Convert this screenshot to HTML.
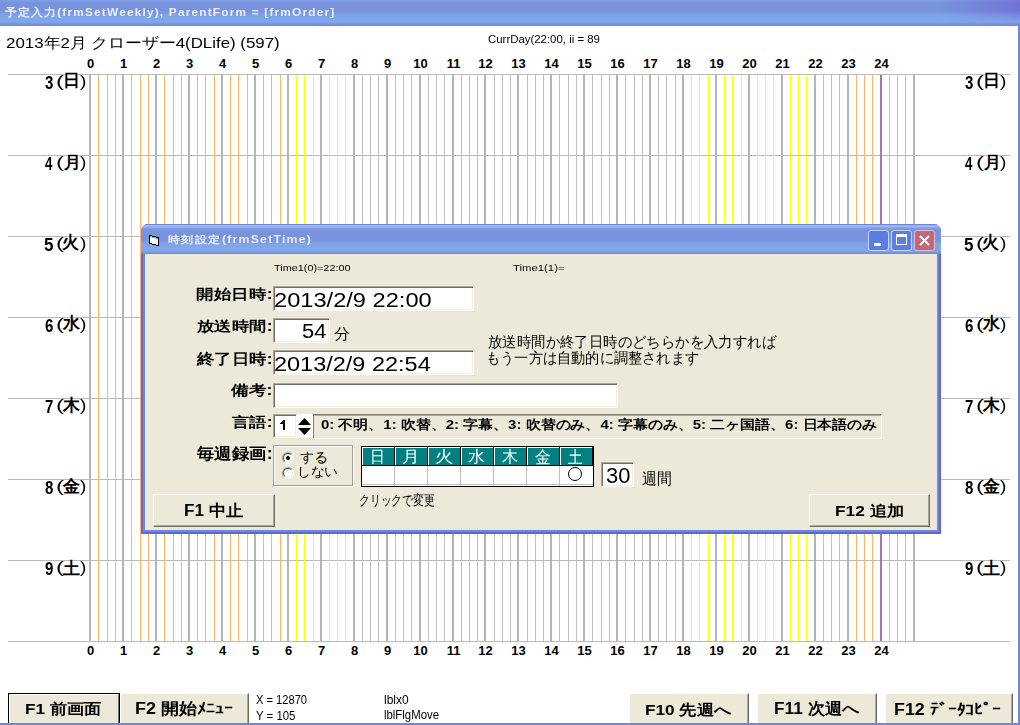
<!DOCTYPE html>
<html lang="ja"><head><meta charset="utf-8"><style>
*{box-sizing:border-box}
html,body{margin:0;padding:0;width:1020px;height:725px;overflow:hidden;background:#fff;font-family:"Liberation Sans",sans-serif;color:#000}
.a{position:absolute;white-space:nowrap}
.t{position:absolute;white-space:nowrap;transform-origin:0 0}
.vl{position:absolute;top:75px;height:566px}
.hl{position:absolute;left:8px;width:1002px;height:1px;background:#b9b9b9}
.lab{position:absolute;font-size:13px;font-weight:bold;line-height:13px;width:40px;text-align:center}
</style></head><body>

<div class="a" style="left:0;top:0;width:1020px;height:26px;background:linear-gradient(to bottom,#7c9de4 0px,#7c9de4 1px,#7892dd 3px,#7892dd 11px,#7ea6e7 16px,#80a8e8 22px,#7a90e0 24px,#6f88dc 26px)"></div>
<div class="a" style="left:940px;top:0;width:80px;height:24px;background:linear-gradient(to right,rgba(112,108,214,0) 0%,rgba(112,108,214,0.55) 75%,rgba(112,108,214,0.85) 100%);-webkit-mask-image:linear-gradient(to bottom,#000 40%,transparent 100%)"></div>
<div class="t" style="left:5.00px;top:7.00px;font-size:12px;line-height:12px;font-weight:bold;color:#e9eefa;transform:scale(0.9880,0.9231);letter-spacing:1.2px">予定入力(frmSetWeekly), ParentForm = [frmOrder]</div>
<div class="t" style="left:5.95px;top:36.00px;font-size:16px;line-height:16px;font-weight:normal;color:#000;transform:scale(1.0543,0.9375);">2013年2月 クローザー4(DLife) (597)</div>
<div class="t" style="left:488.00px;top:34.00px;font-size:11px;line-height:11px;font-weight:normal;color:#000;transform:scale(1.0370,1.0000);">CurrDay(22:00, ii = 89</div>
<div class="hl" style="top:74px"></div>
<div class="hl" style="top:155px"></div>
<div class="hl" style="top:236px"></div>
<div class="hl" style="top:317px"></div>
<div class="hl" style="top:398px"></div>
<div class="hl" style="top:479px"></div>
<div class="hl" style="top:560px"></div>
<div class="hl" style="top:641px"></div>
<div class="vl" style="left:89px;width:2px;background:#b4b4b4"></div>
<div class="vl" style="left:98px;width:1px;background:#ffb46a"></div>
<div class="vl" style="left:107px;width:1px;background:#ffb46a"></div>
<div class="vl" style="left:115px;width:1px;background:#ffb46a"></div>
<div class="vl" style="left:122px;width:2px;background:#b4b4b4"></div>
<div class="vl" style="left:131px;width:1px;background:#ffb46a"></div>
<div class="vl" style="left:140px;width:1px;background:#ffb46a"></div>
<div class="vl" style="left:148px;width:1px;background:#ffb46a"></div>
<div class="vl" style="left:155px;width:2px;background:#b4b4b4"></div>
<div class="vl" style="left:164px;width:1px;background:#ffb46a"></div>
<div class="vl" style="left:173px;width:1px;background:#ffb46a"></div>
<div class="vl" style="left:181px;width:1px;background:#ffb46a"></div>
<div class="vl" style="left:188px;width:2px;background:#b4b4b4"></div>
<div class="vl" style="left:197px;width:1px;background:#ffb46a"></div>
<div class="vl" style="left:205px;width:1px;background:#ffb46a"></div>
<div class="vl" style="left:214px;width:1px;background:#ffb46a"></div>
<div class="vl" style="left:221px;width:2px;background:#b4b4b4"></div>
<div class="vl" style="left:230px;width:1px;background:#ffb46a"></div>
<div class="vl" style="left:238px;width:1px;background:#ffb46a"></div>
<div class="vl" style="left:247px;width:1px;background:#ffb46a"></div>
<div class="vl" style="left:254px;width:2px;background:#b4b4b4"></div>
<div class="vl" style="left:263px;width:1px;background:#ffb46a"></div>
<div class="vl" style="left:271px;width:1px;background:#ffb46a"></div>
<div class="vl" style="left:280px;width:1px;background:#ffb46a"></div>
<div class="vl" style="left:287px;width:2px;background:#b4b4b4"></div>
<div class="vl" style="left:296px;width:1px;background:#ffff00"></div>
<div class="vl" style="left:304px;width:1px;background:#ffff00"></div>
<div class="vl" style="left:313px;width:1px;background:#ffff00"></div>
<div class="vl" style="left:320px;width:2px;background:#b4b4b4"></div>
<div class="vl" style="left:329px;width:1px;background:#ffff00"></div>
<div class="vl" style="left:337px;width:1px;background:#ffff00"></div>
<div class="vl" style="left:345px;width:1px;background:#ffff00"></div>
<div class="vl" style="left:353px;width:2px;background:#b4b4b4"></div>
<div class="vl" style="left:362px;width:1px;background:#c0c0c0"></div>
<div class="vl" style="left:370px;width:1px;background:#c0c0c0"></div>
<div class="vl" style="left:378px;width:1px;background:#c0c0c0"></div>
<div class="vl" style="left:386px;width:2px;background:#b4b4b4"></div>
<div class="vl" style="left:395px;width:1px;background:#c0c0c0"></div>
<div class="vl" style="left:403px;width:1px;background:#c0c0c0"></div>
<div class="vl" style="left:411px;width:1px;background:#c0c0c0"></div>
<div class="vl" style="left:419px;width:2px;background:#b4b4b4"></div>
<div class="vl" style="left:428px;width:1px;background:#c0c0c0"></div>
<div class="vl" style="left:436px;width:1px;background:#c0c0c0"></div>
<div class="vl" style="left:444px;width:1px;background:#c0c0c0"></div>
<div class="vl" style="left:452px;width:2px;background:#b4b4b4"></div>
<div class="vl" style="left:461px;width:1px;background:#c0c0c0"></div>
<div class="vl" style="left:469px;width:1px;background:#c0c0c0"></div>
<div class="vl" style="left:477px;width:1px;background:#c0c0c0"></div>
<div class="vl" style="left:484px;width:2px;background:#b4b4b4"></div>
<div class="vl" style="left:494px;width:1px;background:#c0c0c0"></div>
<div class="vl" style="left:502px;width:1px;background:#c0c0c0"></div>
<div class="vl" style="left:510px;width:1px;background:#c0c0c0"></div>
<div class="vl" style="left:517px;width:2px;background:#b4b4b4"></div>
<div class="vl" style="left:527px;width:1px;background:#c0c0c0"></div>
<div class="vl" style="left:535px;width:1px;background:#c0c0c0"></div>
<div class="vl" style="left:543px;width:1px;background:#c0c0c0"></div>
<div class="vl" style="left:550px;width:2px;background:#b4b4b4"></div>
<div class="vl" style="left:559px;width:1px;background:#c0c0c0"></div>
<div class="vl" style="left:568px;width:1px;background:#c0c0c0"></div>
<div class="vl" style="left:576px;width:1px;background:#c0c0c0"></div>
<div class="vl" style="left:583px;width:2px;background:#b4b4b4"></div>
<div class="vl" style="left:592px;width:1px;background:#c0c0c0"></div>
<div class="vl" style="left:601px;width:1px;background:#c0c0c0"></div>
<div class="vl" style="left:609px;width:1px;background:#c0c0c0"></div>
<div class="vl" style="left:616px;width:2px;background:#b4b4b4"></div>
<div class="vl" style="left:625px;width:1px;background:#c0c0c0"></div>
<div class="vl" style="left:634px;width:1px;background:#c0c0c0"></div>
<div class="vl" style="left:642px;width:1px;background:#c0c0c0"></div>
<div class="vl" style="left:649px;width:2px;background:#b4b4b4"></div>
<div class="vl" style="left:658px;width:1px;background:#c0c0c0"></div>
<div class="vl" style="left:666px;width:1px;background:#c0c0c0"></div>
<div class="vl" style="left:675px;width:1px;background:#c0c0c0"></div>
<div class="vl" style="left:682px;width:2px;background:#b4b4b4"></div>
<div class="vl" style="left:691px;width:1px;background:#ffff00"></div>
<div class="vl" style="left:699px;width:1px;background:#ffff00"></div>
<div class="vl" style="left:708px;width:1px;background:#ffff00"></div>
<div class="vl" style="left:715px;width:2px;background:#b4b4b4"></div>
<div class="vl" style="left:724px;width:1px;background:#ffff00"></div>
<div class="vl" style="left:732px;width:1px;background:#ffff00"></div>
<div class="vl" style="left:741px;width:1px;background:#ffff00"></div>
<div class="vl" style="left:748px;width:2px;background:#b4b4b4"></div>
<div class="vl" style="left:757px;width:1px;background:#ffff00"></div>
<div class="vl" style="left:765px;width:1px;background:#ffff00"></div>
<div class="vl" style="left:773px;width:1px;background:#ffff00"></div>
<div class="vl" style="left:781px;width:2px;background:#b4b4b4"></div>
<div class="vl" style="left:790px;width:1px;background:#ffff00"></div>
<div class="vl" style="left:798px;width:1px;background:#ffff00"></div>
<div class="vl" style="left:806px;width:1px;background:#ffff00"></div>
<div class="vl" style="left:814px;width:2px;background:#b4b4b4"></div>
<div class="vl" style="left:823px;width:1px;background:#ffb46a"></div>
<div class="vl" style="left:831px;width:1px;background:#ffb46a"></div>
<div class="vl" style="left:839px;width:1px;background:#ffb46a"></div>
<div class="vl" style="left:847px;width:2px;background:#b4b4b4"></div>
<div class="vl" style="left:856px;width:1px;background:#ffb46a"></div>
<div class="vl" style="left:864px;width:1px;background:#ffb46a"></div>
<div class="vl" style="left:872px;width:1px;background:#ffb46a"></div>
<div class="vl" style="left:880px;width:2px;background:#b070c0"></div>
<div class="vl" style="left:889px;width:1px;background:#ffb46a"></div>
<div class="vl" style="left:897px;width:1px;background:#ffb46a"></div>
<div class="vl" style="left:905px;width:1px;background:#ffb46a"></div>
<div class="vl" style="left:913px;width:2px;background:#b4b4b4"></div>
<div class="lab" style="left:70.5px;top:57px">0</div>
<div class="lab" style="left:70.5px;top:644px">0</div>
<div class="lab" style="left:103.5px;top:57px">1</div>
<div class="lab" style="left:103.5px;top:644px">1</div>
<div class="lab" style="left:136.5px;top:57px">2</div>
<div class="lab" style="left:136.5px;top:644px">2</div>
<div class="lab" style="left:169.5px;top:57px">3</div>
<div class="lab" style="left:169.5px;top:644px">3</div>
<div class="lab" style="left:202.5px;top:57px">4</div>
<div class="lab" style="left:202.5px;top:644px">4</div>
<div class="lab" style="left:235.5px;top:57px">5</div>
<div class="lab" style="left:235.5px;top:644px">5</div>
<div class="lab" style="left:268.5px;top:57px">6</div>
<div class="lab" style="left:268.5px;top:644px">6</div>
<div class="lab" style="left:301.5px;top:57px">7</div>
<div class="lab" style="left:301.5px;top:644px">7</div>
<div class="lab" style="left:334.5px;top:57px">8</div>
<div class="lab" style="left:334.5px;top:644px">8</div>
<div class="lab" style="left:367.5px;top:57px">9</div>
<div class="lab" style="left:367.5px;top:644px">9</div>
<div class="lab" style="left:400.5px;top:57px">10</div>
<div class="lab" style="left:400.5px;top:644px">10</div>
<div class="lab" style="left:433.5px;top:57px">11</div>
<div class="lab" style="left:433.5px;top:644px">11</div>
<div class="lab" style="left:465.5px;top:57px">12</div>
<div class="lab" style="left:465.5px;top:644px">12</div>
<div class="lab" style="left:498.5px;top:57px">13</div>
<div class="lab" style="left:498.5px;top:644px">13</div>
<div class="lab" style="left:531.5px;top:57px">14</div>
<div class="lab" style="left:531.5px;top:644px">14</div>
<div class="lab" style="left:564.5px;top:57px">15</div>
<div class="lab" style="left:564.5px;top:644px">15</div>
<div class="lab" style="left:597.5px;top:57px">16</div>
<div class="lab" style="left:597.5px;top:644px">16</div>
<div class="lab" style="left:630.5px;top:57px">17</div>
<div class="lab" style="left:630.5px;top:644px">17</div>
<div class="lab" style="left:663.5px;top:57px">18</div>
<div class="lab" style="left:663.5px;top:644px">18</div>
<div class="lab" style="left:696.5px;top:57px">19</div>
<div class="lab" style="left:696.5px;top:644px">19</div>
<div class="lab" style="left:729.5px;top:57px">20</div>
<div class="lab" style="left:729.5px;top:644px">20</div>
<div class="lab" style="left:762.5px;top:57px">21</div>
<div class="lab" style="left:762.5px;top:644px">21</div>
<div class="lab" style="left:795.5px;top:57px">22</div>
<div class="lab" style="left:795.5px;top:644px">22</div>
<div class="lab" style="left:828.5px;top:57px">23</div>
<div class="lab" style="left:828.5px;top:644px">23</div>
<div class="lab" style="left:861.5px;top:57px">24</div>
<div class="lab" style="left:861.5px;top:644px">24</div>
<div class="t" style="left:45.00px;top:73.40px;font-size:15px;line-height:15px;font-weight:bold;color:#000;transform:scale(1.0000,1.2000);">3</div>
<div class="t" style="left:55.50px;top:72.93px;font-size:16px;line-height:16px;font-weight:normal;color:#000;transform:scale(1.5000,1.0667);">(</div>
<div class="t" style="left:62.50px;top:72.00px;font-size:17px;line-height:17px;font-weight:bold;color:#000;transform:scale(1.0000,1.0000);">日</div>
<div class="t" style="left:80.00px;top:72.93px;font-size:16px;line-height:16px;font-weight:normal;color:#000;transform:scale(1.2000,1.0667);">)</div>
<div class="t" style="left:965.00px;top:73.40px;font-size:15px;line-height:15px;font-weight:bold;color:#000;transform:scale(1.0000,1.2000);">3</div>
<div class="t" style="left:975.50px;top:72.93px;font-size:16px;line-height:16px;font-weight:normal;color:#000;transform:scale(1.5000,1.0667);">(</div>
<div class="t" style="left:982.50px;top:72.00px;font-size:17px;line-height:17px;font-weight:bold;color:#000;transform:scale(1.0000,1.0000);">日</div>
<div class="t" style="left:1000.00px;top:72.93px;font-size:16px;line-height:16px;font-weight:normal;color:#000;transform:scale(1.2000,1.0667);">)</div>
<div class="t" style="left:45.00px;top:154.40px;font-size:15px;line-height:15px;font-weight:bold;color:#000;transform:scale(0.8889,1.2000);">4</div>
<div class="t" style="left:55.50px;top:153.93px;font-size:16px;line-height:16px;font-weight:normal;color:#000;transform:scale(1.5000,1.0667);">(</div>
<div class="t" style="left:64.00px;top:154.00px;font-size:17px;line-height:17px;font-weight:bold;color:#000;transform:scale(1.0000,1.0000);">月</div>
<div class="t" style="left:80.00px;top:153.93px;font-size:16px;line-height:16px;font-weight:normal;color:#000;transform:scale(1.2000,1.0667);">)</div>
<div class="t" style="left:965.00px;top:154.40px;font-size:15px;line-height:15px;font-weight:bold;color:#000;transform:scale(0.8889,1.2000);">4</div>
<div class="t" style="left:975.50px;top:153.93px;font-size:16px;line-height:16px;font-weight:normal;color:#000;transform:scale(1.5000,1.0667);">(</div>
<div class="t" style="left:984.00px;top:154.00px;font-size:17px;line-height:17px;font-weight:bold;color:#000;transform:scale(1.0000,1.0000);">月</div>
<div class="t" style="left:1000.00px;top:153.93px;font-size:16px;line-height:16px;font-weight:normal;color:#000;transform:scale(1.2000,1.0667);">)</div>
<div class="t" style="left:43.86px;top:235.40px;font-size:15px;line-height:15px;font-weight:bold;color:#000;transform:scale(1.1429,1.2000);">5</div>
<div class="t" style="left:55.50px;top:234.93px;font-size:16px;line-height:16px;font-weight:normal;color:#000;transform:scale(1.5000,1.0667);">(</div>
<div class="t" style="left:62.00px;top:234.00px;font-size:17px;line-height:17px;font-weight:bold;color:#000;transform:scale(1.0000,1.0000);">火</div>
<div class="t" style="left:80.00px;top:234.93px;font-size:16px;line-height:16px;font-weight:normal;color:#000;transform:scale(1.2000,1.0667);">)</div>
<div class="t" style="left:963.86px;top:235.40px;font-size:15px;line-height:15px;font-weight:bold;color:#000;transform:scale(1.1429,1.2000);">5</div>
<div class="t" style="left:975.50px;top:234.93px;font-size:16px;line-height:16px;font-weight:normal;color:#000;transform:scale(1.5000,1.0667);">(</div>
<div class="t" style="left:982.00px;top:234.00px;font-size:17px;line-height:17px;font-weight:bold;color:#000;transform:scale(1.0000,1.0000);">火</div>
<div class="t" style="left:1000.00px;top:234.93px;font-size:16px;line-height:16px;font-weight:normal;color:#000;transform:scale(1.2000,1.0667);">)</div>
<div class="t" style="left:45.00px;top:316.40px;font-size:15px;line-height:15px;font-weight:bold;color:#000;transform:scale(1.0000,1.2000);">6</div>
<div class="t" style="left:55.50px;top:315.93px;font-size:16px;line-height:16px;font-weight:normal;color:#000;transform:scale(1.5000,1.0667);">(</div>
<div class="t" style="left:62.50px;top:315.00px;font-size:17px;line-height:17px;font-weight:bold;color:#000;transform:scale(1.0000,1.0000);">水</div>
<div class="t" style="left:80.00px;top:315.93px;font-size:16px;line-height:16px;font-weight:normal;color:#000;transform:scale(1.2000,1.0667);">)</div>
<div class="t" style="left:965.00px;top:316.40px;font-size:15px;line-height:15px;font-weight:bold;color:#000;transform:scale(1.0000,1.2000);">6</div>
<div class="t" style="left:975.50px;top:315.93px;font-size:16px;line-height:16px;font-weight:normal;color:#000;transform:scale(1.5000,1.0667);">(</div>
<div class="t" style="left:982.50px;top:315.00px;font-size:17px;line-height:17px;font-weight:bold;color:#000;transform:scale(1.0000,1.0000);">水</div>
<div class="t" style="left:1000.00px;top:315.93px;font-size:16px;line-height:16px;font-weight:normal;color:#000;transform:scale(1.2000,1.0667);">)</div>
<div class="t" style="left:45.00px;top:397.40px;font-size:15px;line-height:15px;font-weight:bold;color:#000;transform:scale(1.0000,1.2000);">7</div>
<div class="t" style="left:55.50px;top:396.93px;font-size:16px;line-height:16px;font-weight:normal;color:#000;transform:scale(1.5000,1.0667);">(</div>
<div class="t" style="left:62.50px;top:397.00px;font-size:17px;line-height:17px;font-weight:bold;color:#000;transform:scale(1.0000,1.0000);">木</div>
<div class="t" style="left:80.00px;top:396.93px;font-size:16px;line-height:16px;font-weight:normal;color:#000;transform:scale(1.2000,1.0667);">)</div>
<div class="t" style="left:965.00px;top:397.40px;font-size:15px;line-height:15px;font-weight:bold;color:#000;transform:scale(1.0000,1.2000);">7</div>
<div class="t" style="left:975.50px;top:396.93px;font-size:16px;line-height:16px;font-weight:normal;color:#000;transform:scale(1.5000,1.0667);">(</div>
<div class="t" style="left:982.50px;top:397.00px;font-size:17px;line-height:17px;font-weight:bold;color:#000;transform:scale(1.0000,1.0000);">木</div>
<div class="t" style="left:1000.00px;top:396.93px;font-size:16px;line-height:16px;font-weight:normal;color:#000;transform:scale(1.2000,1.0667);">)</div>
<div class="t" style="left:45.00px;top:478.40px;font-size:15px;line-height:15px;font-weight:bold;color:#000;transform:scale(1.0000,1.2000);">8</div>
<div class="t" style="left:55.50px;top:477.93px;font-size:16px;line-height:16px;font-weight:normal;color:#000;transform:scale(1.5000,1.0667);">(</div>
<div class="t" style="left:62.50px;top:478.00px;font-size:17px;line-height:17px;font-weight:bold;color:#000;transform:scale(1.0000,1.0000);">金</div>
<div class="t" style="left:80.00px;top:477.93px;font-size:16px;line-height:16px;font-weight:normal;color:#000;transform:scale(1.2000,1.0667);">)</div>
<div class="t" style="left:965.00px;top:478.40px;font-size:15px;line-height:15px;font-weight:bold;color:#000;transform:scale(1.0000,1.2000);">8</div>
<div class="t" style="left:975.50px;top:477.93px;font-size:16px;line-height:16px;font-weight:normal;color:#000;transform:scale(1.5000,1.0667);">(</div>
<div class="t" style="left:982.50px;top:478.00px;font-size:17px;line-height:17px;font-weight:bold;color:#000;transform:scale(1.0000,1.0000);">金</div>
<div class="t" style="left:1000.00px;top:477.93px;font-size:16px;line-height:16px;font-weight:normal;color:#000;transform:scale(1.2000,1.0667);">)</div>
<div class="t" style="left:45.00px;top:559.40px;font-size:15px;line-height:15px;font-weight:bold;color:#000;transform:scale(1.0000,1.2000);">9</div>
<div class="t" style="left:55.50px;top:558.93px;font-size:16px;line-height:16px;font-weight:normal;color:#000;transform:scale(1.5000,1.0667);">(</div>
<div class="t" style="left:62.50px;top:560.00px;font-size:17px;line-height:17px;font-weight:bold;color:#000;transform:scale(1.0000,1.0000);">土</div>
<div class="t" style="left:80.00px;top:558.93px;font-size:16px;line-height:16px;font-weight:normal;color:#000;transform:scale(1.2000,1.0667);">)</div>
<div class="t" style="left:965.00px;top:559.40px;font-size:15px;line-height:15px;font-weight:bold;color:#000;transform:scale(1.0000,1.2000);">9</div>
<div class="t" style="left:975.50px;top:558.93px;font-size:16px;line-height:16px;font-weight:normal;color:#000;transform:scale(1.5000,1.0667);">(</div>
<div class="t" style="left:982.50px;top:560.00px;font-size:17px;line-height:17px;font-weight:bold;color:#000;transform:scale(1.0000,1.0000);">土</div>
<div class="t" style="left:1000.00px;top:558.93px;font-size:16px;line-height:16px;font-weight:normal;color:#000;transform:scale(1.2000,1.0667);">)</div>
<div class="a" style="left:8px;top:693px;width:112px;height:32px;border:1px solid #000;background:#ece9d8"><div class="a" style="left:0;top:0;width:110px;height:30px;border-top:1px solid #fff;border-left:1px solid #fff;border-right:1px solid #716f64;"></div></div>
<div class="t" style="left:24.93px;top:702.00px;font-size:16px;line-height:16px;font-weight:bold;color:#000;transform:scale(1.0714,0.9333);">F1 前画面</div>
<div class="a" style="left:120px;top:693px;width:129px;height:32px;background:#ece9d8;border-top:1px solid #fff;border-left:1px solid #fff;border-right:1px solid #716f64;border-bottom:1px solid #716f64;box-shadow:inset -1px -1px 0 #aca899"></div>
<div class="t" style="left:134.87px;top:701.00px;font-size:16px;line-height:16px;font-weight:bold;color:#000;transform:scale(1.1279,1.0000);">F2 開始ﾒﾆｭｰ</div>
<div class="t" style="left:256.00px;top:692.89px;font-size:12px;line-height:12px;font-weight:normal;color:#000;transform:scale(0.9273,1.1111);">X = 12870</div>
<div class="t" style="left:256.00px;top:708.89px;font-size:12px;line-height:12px;font-weight:normal;color:#000;transform:scale(0.9512,1.1111);">Y = 105</div>
<div class="t" style="left:384.00px;top:692.89px;font-size:12px;line-height:12px;font-weight:normal;color:#000;transform:scale(1.0000,1.1111);">lblx0</div>
<div class="t" style="left:384.05px;top:709.00px;font-size:12px;line-height:12px;font-weight:normal;color:#000;transform:scale(0.9474,1.0000);">lblFlgMove</div>
<div class="a" style="left:629px;top:693px;width:120px;height:32px;background:#ece9d8;border-top:1px solid #fff;border-left:1px solid #fff;border-right:1px solid #716f64;border-bottom:1px solid #716f64;box-shadow:inset -1px -1px 0 #aca899"></div>
<div class="t" style="left:644.92px;top:702.94px;font-size:16px;line-height:16px;font-weight:bold;color:#000;transform:scale(1.0759,0.9375);">F10 先週へ</div>
<div class="a" style="left:757px;top:693px;width:120px;height:32px;background:#ece9d8;border-top:1px solid #fff;border-left:1px solid #fff;border-right:1px solid #716f64;border-bottom:1px solid #716f64;box-shadow:inset -1px -1px 0 #aca899"></div>
<div class="t" style="left:773.92px;top:701.00px;font-size:16px;line-height:16px;font-weight:bold;color:#000;transform:scale(1.0769,1.0000);">F11 次週へ</div>
<div class="a" style="left:885px;top:693px;width:128px;height:32px;background:#ece9d8;border-top:1px solid #fff;border-left:1px solid #fff;border-right:1px solid #716f64;border-bottom:1px solid #716f64;box-shadow:inset -1px -1px 0 #aca899"></div>
<div class="t" style="left:893.88px;top:702.00px;font-size:16px;line-height:16px;font-weight:bold;color:#000;transform:scale(1.1158,1.0000);">F12 ﾃﾞｰﾀｺﾋﾟｰ</div>
<div class="a" style="left:141px;top:224px;width:800px;height:310px;background:#5f68d2;border-radius:7px 7px 0 0;overflow:hidden">
<div class="a" style="left:2px;top:2px;width:796px;height:306px;background:#6f88de"></div>
<div class="a" style="left:0;top:0;width:800px;height:30px;background:linear-gradient(to bottom,#6b85dd 0px,#6b85dd 1px,#a0b4ec 1px,#a0b4ec 3px,#7ea0e4 4px,#7892dd 7px,#7892dd 16px,#7ea6e8 20px,#7ea6e8 27px,#7890e0 29px,#6a82dc 30px)"></div>
</div>
<div class="a" style="left:145px;top:254px;width:792px;height:276px;background:#ece9d8"></div>
<svg class="a" style="left:149px;top:235px" width="11" height="11" shape-rendering="crispEdges"><rect x="1" y="2" width="2" height="6" fill="#fff"/><rect x="3" y="3" width="4" height="6" fill="#fff"/><rect x="7" y="4" width="2" height="6" fill="#fff"/><rect x="0" y="0" width="3" height="1" fill="#000"/><rect x="3" y="1" width="4" height="1" fill="#000"/><rect x="7" y="2" width="3" height="1" fill="#000"/><rect x="1" y="1" width="2" height="1" fill="#00e0e0"/><rect x="3" y="2" width="4" height="1" fill="#00e0e0"/><rect x="7" y="3" width="2" height="1" fill="#00e0e0"/><rect x="0" y="0" width="1" height="9" fill="#000"/><rect x="9" y="2" width="1" height="9" fill="#000"/><rect x="0" y="8" width="3" height="1" fill="#000"/><rect x="3" y="9" width="4" height="1" fill="#000"/><rect x="7" y="10" width="3" height="1" fill="#000"/></svg>
<div class="t" style="left:168.00px;top:235.00px;font-size:12px;line-height:12px;font-weight:bold;color:#e9eefa;transform:scale(1.0216,0.8462);letter-spacing:1.2px">時刻設定(frmSetTime)</div>
<div class="a" style="left:868px;top:230px;width:21px;height:21px;border:1px solid #c8d4f4;border-radius:3px;background:#5a7ee4"><div class="a" style="left:5px;top:12px;width:7px;height:3px;background:#fff"></div></div>
<div class="a" style="left:891px;top:230px;width:21px;height:21px;border:1px solid #c8d4f4;border-radius:3px;background:#5a7ee4"><div class="a" style="left:4px;top:3px;width:11px;height:11px;border:1px solid #fff;border-top-width:3px"></div></div>
<div class="a" style="left:914px;top:230px;width:21px;height:21px;border:1px solid #d8c0d0;border-radius:3px;background:#c06878"><svg class="a" style="left:3px;top:3px" width="13" height="13" viewBox="0 0 13 13"><path d="M2 2L11 11M11 2L2 11" stroke="#fff" stroke-width="2"/></svg></div>
<div class="t" style="left:274.00px;top:264.00px;font-size:10px;line-height:10px;font-weight:normal;color:#000;transform:scale(1.0857,0.9000);">Time1(0)=22:00</div>
<div class="t" style="left:513.00px;top:264.00px;font-size:10px;line-height:10px;font-weight:normal;color:#000;transform:scale(1.1333,0.9000);">Time1(1)=</div>
<div class="t" style="left:195.90px;top:287.88px;font-size:16px;line-height:16px;font-weight:bold;color:#000;transform:scale(1.1045,0.8824);">開始日時:</div>
<div class="t" style="left:197.00px;top:319.88px;font-size:16px;line-height:16px;font-weight:bold;color:#000;transform:scale(1.0882,0.8824);">放送時間:</div>
<div class="t" style="left:197.00px;top:351.94px;font-size:16px;line-height:16px;font-weight:bold;color:#000;transform:scale(1.0882,0.9375);">終了日時:</div>
<div class="t" style="left:231.00px;top:383.88px;font-size:16px;line-height:16px;font-weight:bold;color:#000;transform:scale(1.1111,0.8824);">備考:</div>
<div class="t" style="left:232.00px;top:415.88px;font-size:16px;line-height:16px;font-weight:bold;color:#000;transform:scale(1.0833,0.8824);">言語:</div>
<div class="t" style="left:197.00px;top:446.00px;font-size:16px;line-height:16px;font-weight:bold;color:#000;transform:scale(1.0882,1.0000);">毎週録画:</div>
<div class="a" style="left:273px;top:286px;width:201px;height:25px;border:1px solid;border-color:#aca899 #fff #fff #aca899;box-shadow:inset 1px 1px 0 #716f64, inset -1px -1px 0 #f1efe2;background:#fff"></div>
<div class="t" style="left:273.82px;top:290.00px;font-size:20px;line-height:20px;font-weight:normal;color:#000;transform:scale(1.1818,1.0000);">2013/2/9 22:00</div>
<div class="a" style="left:273px;top:318px;width:57px;height:25px;border:1px solid;border-color:#aca899 #fff #fff #aca899;box-shadow:inset 1px 1px 0 #716f64, inset -1px -1px 0 #f1efe2;background:#fff"></div>
<div class="t" style="left:301.90px;top:321.00px;font-size:20px;line-height:20px;font-weight:normal;color:#000;transform:scale(1.0952,1.0000);">54</div>
<div class="t" style="left:333.83px;top:325.92px;font-size:14px;line-height:14px;font-weight:normal;color:#000;transform:scale(1.1667,1.0769);">分</div>
<div class="a" style="left:273px;top:350px;width:201px;height:25px;border:1px solid;border-color:#aca899 #fff #fff #aca899;box-shadow:inset 1px 1px 0 #716f64, inset -1px -1px 0 #f1efe2;background:#fff"></div>
<div class="t" style="left:273.83px;top:354.00px;font-size:20px;line-height:20px;font-weight:normal;color:#000;transform:scale(1.1742,1.0000);">2013/2/9 22:54</div>
<div class="a" style="left:273px;top:383px;width:345px;height:25px;border:1px solid;border-color:#aca899 #fff #fff #aca899;box-shadow:inset 1px 1px 0 #716f64, inset -1px -1px 0 #f1efe2;background:#fff"></div>
<div class="t" style="left:487.97px;top:334.00px;font-size:14px;line-height:14px;font-weight:normal;color:#000;transform:scale(1.0287,1.0714);">放送時間か終了日時のどちらかを入力すれば</div>
<div class="t" style="left:485.96px;top:350.00px;font-size:14px;line-height:14px;font-weight:normal;color:#000;transform:scale(1.0146,1.0714);">もう一方は自動的に調整されます</div>
<div class="a" style="left:273px;top:414px;width:24px;height:24px;border:1px solid;border-color:#aca899 #fff #fff #aca899;box-shadow:inset 1px 1px 0 #716f64, inset -1px -1px 0 #f1efe2;background:#fff"></div>
<div class="a" style="left:297px;top:414px;width:16px;height:24px;background:#fff"></div>
<div class="a" style="left:283px;top:420px;width:2px;height:10px;background:#000"></div><div class="a" style="left:281px;top:422px;width:2px;height:2px;background:#000"></div><div class="a" style="left:280px;top:423px;width:1px;height:1px;background:#000"></div><div class="a" style="left:282px;top:421px;width:1px;height:1px;background:#000"></div>
<svg class="a" style="left:297px;top:414px" width="16" height="24" viewBox="0 0 16 24"><path d="M1 11L7.5 4L14 11z" fill="#000"/><path d="M1 14L7.5 21L14 14z" fill="#000"/></svg>
<div class="a" style="left:313px;top:414px;width:569px;height:25px;border-top:1px solid #7d7b70;border-left:1px solid #7d7b70;border-right:1px solid #fff;border-bottom:1px solid #fff;box-shadow:inset 0 1px 0 #b0ad9f"></div>
<div class="t" style="left:321.00px;top:418.00px;font-size:14px;line-height:14px;font-weight:bold;color:#000;transform:scale(1.0692,0.9286);">0: 不明、1: 吹替、2: 字幕、3: 吹替のみ、4: 字幕のみ、5: 二ヶ国語、6: 日本語のみ</div>
<div class="a" style="left:274px;top:446px;width:80px;height:41px;border:1px solid #fff"></div>
<div class="a" style="left:273px;top:445px;width:80px;height:41px;border:1px solid #a09e94"></div>
<div class="a" style="left:282px;top:452px;width:12px;height:12px;border-radius:50%;background:#fff;border:1px solid;border-color:#9d9b90 #fff #fff #9d9b90"><div class="a" style="left:0;top:0;width:10px;height:10px;border-radius:50%;border:1px solid;border-color:#505050 #e8e6dc #e8e6dc #505050"></div><div class="a" style="left:3px;top:3px;width:4px;height:4px;border-radius:50%;background:#000"></div></div>
<div class="a" style="left:282px;top:467px;width:12px;height:12px;border-radius:50%;background:#fff;border:1px solid;border-color:#9d9b90 #fff #fff #9d9b90"><div class="a" style="left:0;top:0;width:10px;height:10px;border-radius:50%;border:1px solid;border-color:#505050 #e8e6dc #e8e6dc #505050"></div></div>
<div class="t" style="left:300.00px;top:450.00px;font-size:14px;line-height:14px;font-weight:normal;color:#000;transform:scale(1.0000,1.0000);">する</div>
<div class="t" style="left:297.08px;top:465.15px;font-size:14px;line-height:14px;font-weight:normal;color:#000;transform:scale(0.9737,0.9231);">しない</div>
<div class="a" style="left:361px;top:446px;width:233px;height:41px;border:1px solid #000;background:#fff"></div>
<div class="a" style="left:362px;top:447px;width:32px;height:18px;background:#fff"></div>
<div class="a" style="left:363px;top:448px;width:31px;height:17px;background:#008080"></div>
<div class="a" style="left:394px;top:447px;width:1px;height:18px;background:#000"></div>
<div class="a" style="left:394px;top:466px;width:1px;height:20px;background:#c0c0c0"></div>
<div class="t" style="left:370.00px;top:447.93px;font-size:15px;line-height:15px;font-weight:normal;color:#fff;transform:scale(1.0000,1.0714);">日</div>
<div class="a" style="left:395px;top:447px;width:32px;height:18px;background:#fff"></div>
<div class="a" style="left:396px;top:448px;width:31px;height:17px;background:#008080"></div>
<div class="a" style="left:427px;top:447px;width:1px;height:18px;background:#000"></div>
<div class="a" style="left:427px;top:466px;width:1px;height:20px;background:#c0c0c0"></div>
<div class="t" style="left:401.82px;top:447.93px;font-size:15px;line-height:15px;font-weight:normal;color:#fff;transform:scale(1.1818,1.0714);">月</div>
<div class="a" style="left:428px;top:447px;width:32px;height:18px;background:#fff"></div>
<div class="a" style="left:429px;top:448px;width:31px;height:17px;background:#008080"></div>
<div class="a" style="left:460px;top:447px;width:1px;height:18px;background:#000"></div>
<div class="a" style="left:460px;top:466px;width:1px;height:20px;background:#c0c0c0"></div>
<div class="t" style="left:434.77px;top:447.93px;font-size:15px;line-height:15px;font-weight:normal;color:#fff;transform:scale(1.2308,1.0714);">火</div>
<div class="a" style="left:461px;top:447px;width:32px;height:18px;background:#fff"></div>
<div class="a" style="left:462px;top:448px;width:31px;height:17px;background:#008080"></div>
<div class="a" style="left:493px;top:447px;width:1px;height:18px;background:#000"></div>
<div class="a" style="left:493px;top:466px;width:1px;height:20px;background:#c0c0c0"></div>
<div class="t" style="left:467.85px;top:447.93px;font-size:15px;line-height:15px;font-weight:normal;color:#fff;transform:scale(1.1538,1.0714);">水</div>
<div class="a" style="left:494px;top:447px;width:32px;height:18px;background:#fff"></div>
<div class="a" style="left:495px;top:448px;width:31px;height:17px;background:#008080"></div>
<div class="a" style="left:526px;top:447px;width:1px;height:18px;background:#000"></div>
<div class="a" style="left:526px;top:466px;width:1px;height:20px;background:#c0c0c0"></div>
<div class="t" style="left:502.00px;top:447.93px;font-size:15px;line-height:15px;font-weight:normal;color:#fff;transform:scale(1.0714,1.0714);">木</div>
<div class="a" style="left:527px;top:447px;width:32px;height:18px;background:#fff"></div>
<div class="a" style="left:528px;top:448px;width:31px;height:17px;background:#008080"></div>
<div class="a" style="left:559px;top:447px;width:1px;height:18px;background:#000"></div>
<div class="a" style="left:559px;top:466px;width:1px;height:20px;background:#c0c0c0"></div>
<div class="t" style="left:535.00px;top:447.85px;font-size:15px;line-height:15px;font-weight:normal;color:#fff;transform:scale(1.0714,1.1538);">金</div>
<div class="a" style="left:560px;top:447px;width:32px;height:18px;background:#fff"></div>
<div class="a" style="left:561px;top:448px;width:31px;height:17px;background:#008080"></div>
<div class="a" style="left:592px;top:447px;width:1px;height:18px;background:#000"></div>
<div class="t" style="left:568.00px;top:447.85px;font-size:15px;line-height:15px;font-weight:normal;color:#fff;transform:scale(1.0000,1.1538);">土</div>
<div class="a" style="left:362px;top:465px;width:231px;height:1px;background:#000"></div>
<div class="a" style="left:362px;top:484px;width:231px;height:1px;background:#c0c0c0"></div>
<div class="a" style="left:568px;top:467px;width:14px;height:14px;border:1px solid #000;border-radius:50%"></div>
<div class="a" style="left:601px;top:462px;width:33px;height:25px;border:1px solid;border-color:#aca899 #fff #fff #aca899;box-shadow:inset 1px 1px 0 #716f64, inset -1px -1px 0 #f1efe2;background:#fff"></div>
<div class="t" style="left:605.90px;top:464.79px;font-size:20px;line-height:20px;font-weight:normal;color:#000;transform:scale(1.0952,1.0714);">30</div>
<div class="t" style="left:642.00px;top:469.85px;font-size:14px;line-height:14px;font-weight:normal;color:#000;transform:scale(1.0741,1.1538);">週間</div>
<div class="t" style="left:359.20px;top:493.00px;font-size:12px;line-height:12px;font-weight:normal;color:#000;transform:scale(0.9012,1.1667);">クリックで変更</div>
<div class="a" style="left:153px;top:494px;width:122px;height:33px;background:#ece9d8;border-top:1px solid #fff;border-left:1px solid #fff;border-right:1px solid #716f64;border-bottom:1px solid #716f64;box-shadow:inset -1px -1px 0 #aca899"></div>
<div class="t" style="left:183.93px;top:503.00px;font-size:16px;line-height:16px;font-weight:bold;color:#000;transform:scale(1.0741,1.0000);">F1 中止</div>
<div class="a" style="left:809px;top:494px;width:121px;height:33px;background:#ece9d8;border-top:1px solid #fff;border-left:1px solid #fff;border-right:1px solid #716f64;border-bottom:1px solid #716f64;box-shadow:inset -1px -1px 0 #aca899"></div>
<div class="t" style="left:834.92px;top:503.94px;font-size:16px;line-height:16px;font-weight:bold;color:#000;transform:scale(1.0806,0.9375);">F12 追加</div>
<div class="a" style="left:1018px;top:24px;width:2px;height:701px;background:#6f86dc"></div>
<div class="a" style="left:0;top:723px;width:1020px;height:2px;background:#6f86dc"></div>
</body></html>
